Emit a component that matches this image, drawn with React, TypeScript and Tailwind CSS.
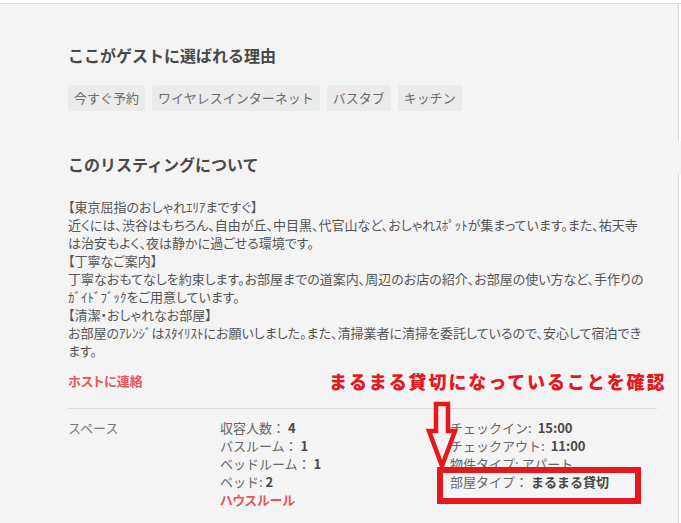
import React from 'react';

const tags = ['今すぐ予約', 'ワイヤレスインターネット', 'バスタブ', 'キッチン'];

const description = [
  '【東京屈指のおしゃれｴﾘｱまですぐ】',
  '近くには、渋谷はもちろん、自由が丘、中目黒、代官山など、おしゃれｽﾎﾟｯﾄが集まっています。また、祐天寺',
  'は治安もよく、夜は静かに過ごせる環境です。',
  '【丁寧なご案内】',
  '丁寧なおもてなしを約束します。お部屋までの道案内、周辺のお店の紹介、お部屋の使い方など、手作りの',
  'ｶﾞｲﾄﾞﾌﾞｯｸをご用意しています。',
  '【清潔・おしゃれなお部屋】',
  'お部屋のｱﾚﾝｼﾞはｽﾀｲﾘｽﾄにお願いしました。また、清掃業者に清掃を委託しているので、安心して宿泊でき',
  'ます。',
];

const Spec: React.FC<{ label: string; value?: string; wide?: boolean }> = ({ label, value, wide }) => (
  <div className="whitespace-nowrap">
    <span>{label}</span>
    {value && <span className={`font-bold text-[#484848] ${wide ? 'ml-[6px]' : ''}`}>{value}</span>}
  </div>
);

const DownArrow: React.FC = () => (
  <svg className="absolute left-[420px] top-[398px]" width="46" height="76" viewBox="0 0 46 76">
    <polygon
      points="16,6 28,6 28,33 35,33 22,68 9,33 16,33"
      fill="#f4f4f4"
      stroke="#e5171f"
      strokeWidth="4.5"
      strokeLinejoin="miter"
    />
  </svg>
);

export default function App() {
  return (
    <div className="relative h-[523px] w-[681px] overflow-hidden bg-[#f4f4f4] font-['Noto_Sans_CJK_JP',sans-serif] text-[#565a5c]">
      {/* top bar */}
      <div className="h-[4px] border-b border-[#dcdcdc] bg-white" />

      <div className="flex">
        <main className="flex-1 pl-[68px] pr-[21px]">
          {/* highlights */}
          <h2 className="mt-[39px] text-[16px] font-bold leading-[24px] text-[#484848]">ここがゲストに選ばれる理由</h2>
          <div className="mt-[18px] flex gap-[7px]">
            {tags.map((t) => (
              <span
                key={t}
                className="h-[26px] rounded-[2px] bg-[#ebebeb] px-[6px] text-[13px] leading-[26px] text-[#6b6b6b]"
              >
                {t}
              </span>
            ))}
          </div>

          {/* about */}
          <h2 className="mt-[41px] text-[16px] font-bold leading-[24px] text-[#484848]">このリスティングについて</h2>
          <p className="mt-[22px] whitespace-nowrap text-[13px] leading-[18px] text-[#555] [font-feature-settings:'palt']">
            {description.map((line, i) => (
              <span key={i} className="block">
                {line}
              </span>
            ))}
          </p>
          <div className="mt-[12px] text-[13px] font-bold leading-[18px] text-[#e8565b] [font-feature-settings:'palt']">
            ホストに連絡
          </div>

          {/* details */}
          <div className="mt-[18px] flex border-t border-[#dcdcdc] pt-[10px] text-[13px] leading-[18px]">
            <div className="w-[152px] text-[#777]">スペース</div>
            <div className="w-[230px] text-[#666]">
              <Spec label="収容人数： " value="4" />
              <Spec label="バスルーム： " value="1" />
              <Spec label="ベッドルーム： " value="1" />
              <Spec label="ベッド: " value="2" />
              <div className="font-bold text-[#e8565b] [font-feature-settings:'palt']">ハウスルール</div>
            </div>
            <div className="text-[#666]">
              <Spec label="チェックイン:" value="15:00" wide />
              <Spec label="チェックアウト:" value="11:00" wide />
              <Spec label="物件タイプ: アパート" />
              <Spec label="部屋タイプ： " value="まるまる貸切" />
            </div>
          </div>
        </main>

        {/* sidebar edge */}
        <aside className="flex w-[3px] flex-col">
          <div className="h-[137px] border-l border-[#d6d6d6] bg-white" />
          <div className="mt-[33px] h-[400px] border-l border-[#d6d6d6] bg-white" />
        </aside>
      </div>

      {/* annotation */}
      <div className="absolute left-[329px] top-[369px] whitespace-nowrap text-[18px] font-black leading-[24px] tracking-[1.9px] text-[#e5171f]">
        まるまる貸切になっていることを確認
      </div>
      <DownArrow />
      <div className="absolute left-[437px] top-[467px] h-[37px] w-[204px] border-[6px] border-[#e5171f]" />
    </div>
  );
}
